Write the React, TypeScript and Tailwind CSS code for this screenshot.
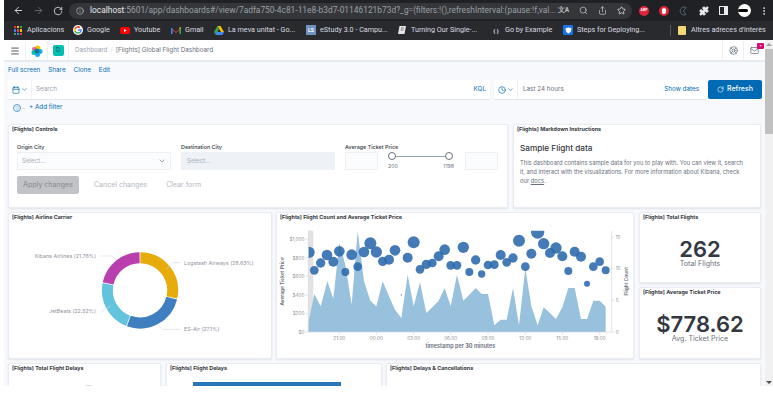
import { ArrowLeft, ArrowRight, RotateCw, Info, Star, Search, Share, Puzzle, MoreVertical, Menu, ChevronDown, Calendar, Clock, LifeBuoy, Mail, Filter } from 'lucide-react';

const bookmarks = [
  { label: 'Aplicacions', icon: <AppsIcon />, w: 'w-[60px]' },
  { label: 'Google', icon: <GoogleIcon />, w: 'w-[47px]' },
  { label: 'Youtube', icon: <YoutubeIcon />, w: 'w-[51px]' },
  { label: 'Gmail', icon: <GmailIcon />, w: 'w-[43px]' },
  { label: 'La meva unitat - Go...', icon: <DriveIcon />, w: 'w-[92px]' },
  { label: 'eStudy 3.0 - Campu...', icon: <StudyIcon />, w: 'w-[91px]' },
  { label: 'Turning Our Single-...', icon: <PageIcon />, w: 'w-[94px]' },
  { label: 'Go by Example', icon: <span className="w-[10px] text-center text-[6px] font-bold text-gray-300">{'{ }'}</span>, w: 'w-[72px]' },
  { label: 'Steps for Deploying...', icon: <ShieldIcon />, w: 'w-[108px]' },
];

function AppsIcon() {
  const colors = ['#ea4335', '#fbbc05', '#34a853', '#4285f4', '#ea4335', '#fbbc05', '#34a853', '#4285f4', '#ea4335'];
  return (
    <div className="grid h-[9px] w-[9px] grid-cols-3 gap-px">
      {colors.map((c, i) => (
        <span key={i} style={{ background: c }} />
      ))}
    </div>
  );
}

function GoogleIcon() {
  return (
    <svg viewBox="0 0 24 24" className="h-[10px] w-[10px]">
      <circle cx="12" cy="12" r="12" fill="#fff" />
      <path d="M21 12.2c0-.7-.1-1.3-.2-1.9H12v3.6h5.1a4.4 4.4 0 0 1-1.9 2.9v2.3h3A9 9 0 0 0 21 12.2z" fill="#4285f4" />
      <path d="M12 21c2.5 0 4.6-.8 6.200-2.200l-3-2.300c-.8.6-1.900.9-3.200.9-2.400 0-4.500-1.600-5.200-3.800H3.700v2.400A9 9 0 0 0 12 21z" fill="#34a853" />
      <path d="M6.800 13.700a5.400 5.400 0 0 1 0-3.400V7.900H3.700a9 9 0 0 0 0 8.200z" fill="#fbbc05" />
      <path d="M12 6.600c1.400 0 2.600.5 3.500 1.400l2.700-2.700A9 9 0 0 0 3.700 7.900l3.100 2.400C7.500 8.200 9.600 6.600 12 6.600z" fill="#ea4335" />
    </svg>
  );
}

function YoutubeIcon() {
  return (
    <svg viewBox="0 0 20 14" className="w-[10px]">
      <rect width="20" height="14" rx="4" fill="#f00" />
      <path d="M8 4l5 3-5 3z" fill="#fff" />
    </svg>
  );
}

function GmailIcon() {
  return (
    <svg viewBox="0 0 20 15" className="w-[10px]">
      <path d="M0 2l10 8 10-8v2l-10 8L0 4z" fill="#ea4335" />
      <path d="M0 2h3v13H1a1 1 0 0 1-1-1z" fill="#4285f4" />
      <path d="M17 2h3v12a1 1 0 0 1-1 1h-2z" fill="#34a853" />
      <path d="M17 5l3-3-1-2-2 1z" fill="#fbbc05" />
    </svg>
  );
}

function DriveIcon() {
  return (
    <svg viewBox="0 0 20 18" className="w-[10px]">
      <path d="M7 0h6l7 12h-6z" fill="#fbbc05" />
      <path d="M7 0l3 6-6 12-4-6z" fill="#34a853" />
      <path d="M6 12h14l-3 6H3z" fill="#4285f4" />
    </svg>
  );
}

function StudyIcon() {
  return (
    <div className="flex h-[10px] w-[10px] items-center justify-center bg-[#6f93bd] text-[5px] font-bold leading-none text-white">
      LS
    </div>
  );
}

function PageIcon() {
  return (
    <svg viewBox="0 0 20 20" className="w-[10px]">
      <path d="M5 2h13l-3 16H2z" fill="#e5e5e5" />
      <path d="M8 6h6M7 10h6" stroke="#555" strokeWidth="1.500" />
    </svg>
  );
}

function ShieldIcon() {
  return (
    <div className="flex h-[10px] w-[10px] items-center justify-center rounded-[1px] bg-[#1a73e8]">
      <svg viewBox="0 0 12 12" className="w-[7px]">
        <path d="M1 2l5-1 5 1c0 5-2 8-5 9-3-1-5-4-5-9z" fill="#fff" />
      </svg>
    </div>
  );
}

function HandIcon() {
  return (
    <svg viewBox="0 0 20 20" className="h-[10px] w-[10px]">
      <circle cx="10" cy="10" r="10" fill="#e0243a" />
      <path d="M6 9V6a1 1 0 0 1 2 0V5a1 1 0 0 1 2 0 1 1 0 0 1 2 0v1a1 1 0 0 1 2 0v6a4 4 0 0 1-4 4H9a3 3 0 0 1-3-3z" fill="#fff" />
    </svg>
  );
}

function MoonIcon() {
  return (
    <svg viewBox="0 0 20 20" className="h-[10px] w-[10px]">
      <path d="M14 3a8 8 0 1 0 0 14M14 3l-5 7 5 7" fill="none" stroke="#4a6470" strokeWidth="2" />
    </svg>
  );
}

function KibanaLogo() {
  return (
    <svg viewBox="0 0 24 24" className="h-[12px] w-[12px]">
      <circle cx="13" cy="7" r="6" fill="#f6c700" />
      <circle cx="6" cy="8" r="4" fill="#ef5aa0" />
      <circle cx="18" cy="13" r="5" fill="#1ba9f5" />
      <circle cx="6" cy="15" r="5" fill="#00bfb3" />
      <circle cx="13" cy="19" r="5" fill="#1ba9f5" />
      <circle cx="12" cy="12" r="5" fill="#0a7d8f" />
    </svg>
  );
}

function Panel({ title, className, children }: { title: string; className: string; children?: React.ReactNode }) {
  return (
    <div className={`relative overflow-hidden rounded-[2px] border border-[#e9ecf2] bg-white shadow-[0_1px_2px_rgba(152,162,179,0.25)] ${className}`}>
      <div className="absolute left-[3px] top-[0px] whitespace-nowrap text-[5.4px] font-bold leading-[9px] text-[#343741]">{title}</div>
      {children}
    </div>
  );
}

const arcs = [
  { from: 0, pct: 28.63, color: '#e7ab0b' },
  { from: 28.63, pct: 27.1, color: '#3f7fbf' },
  { from: 55.73, pct: 22.52, color: '#62c4dc' },
  { from: 78.25, pct: 21.75, color: '#ba3fae' },
];

function arcPath(from: number, pct: number) {
  const r = 98;
  const a0 = (from / 100) * 2 * Math.PI + 0.012;
  const a1 = ((from + pct) / 100) * 2 * Math.PI - 0.012;
  const x0 = 420 + r * Math.sin(a0);
  const y0 = 247 - r * Math.cos(a0);
  const x1 = 420 + r * Math.sin(a1);
  const y1 = 247 - r * Math.cos(a1);
  return `M${x0} ${y0}A${r} ${r} 0 0 1 ${x1} ${y1}`;
}

function Donut() {
  const labels = [
    { x: 552, y: 170, anchor: 'start', text: 'Logstash Airways (28.63%)' },
    { x: 552, y: 368, anchor: 'start', text: 'ES-Air (27.1%)' },
    { x: 288, y: 316, anchor: 'end', text: 'JetBeats (22.52%)' },
    { x: 288, y: 150, anchor: 'end', text: 'Kibana Airlines (21.76%)' },
  ] as const;
  return (
    <svg viewBox="27 15 786 435" className="h-full w-full">
      {arcs.map((a) => (
        <path key={a.color} d={arcPath(a.from, a.pct)} fill="none" stroke={a.color} strokeWidth="33" />
      ))}
      <path d="M498 184l20-20h24M476 350l10 14h56M332 294l-28 16M348 156l-12-12h-34" fill="none" stroke="#d9dce3" strokeWidth="2" />
      {labels.map((l) => (
        <text key={l.text} x={l.x} y={l.y} textAnchor={l.anchor} fontSize="16" fill="#8f949e" fontFamily="Inter, sans-serif">
          {l.text}
        </text>
      ))}
    </svg>
  );
}

const areaPoints =
  '100,372 100,345 118,258 137,295 157,220 175,272 193,105 211,170 230,290 248,68 267,220 286,278 304,295 323,220 342,265 360,305 379,330 398,200 416,295 435,222 454,315 472,298 491,278 509,240 527,295 546,200 565,278 583,260 602,240 620,258 639,258 658,352 677,335 695,335 714,240 732,352 751,180 769,295 788,352 806,298 825,315 843,333 862,298 880,240 899,240 918,333 936,333 955,278 974,278 992,296 992,372';

const bubbles = [
  [102, 133, 17], [118, 187, 13], [137, 165, 14], [156, 141, 16], [175, 161, 15], [193, 130, 16], [211, 192, 12], [230, 140, 16], [248, 176, 13],
  [267, 132, 16], [286, 106, 18], [304, 132, 17], [323, 160, 14], [342, 155, 15], [360, 127, 16], [379, 261, 2], [398, 149, 15], [416, 103, 18],
  [435, 184, 13], [454, 169, 14], [472, 165, 13], [491, 145, 15], [509, 125, 16], [527, 172, 13], [546, 172, 13], [565, 118, 17], [583, 192, 12],
  [602, 156, 14], [620, 198, 11], [639, 171, 13], [658, 170, 13], [677, 141, 15], [695, 163, 13], [714, 150, 14], [732, 98, 18], [751, 176, 13],
  [769, 137, 15], [788, 72, 20], [806, 107, 17], [825, 135, 15], [843, 120, 17], [862, 145, 15], [880, 189, 12], [899, 131, 15], [918, 146, 15],
  [936, 227, 9], [955, 176, 13], [974, 161, 13], [992, 187, 12],
];

const leftTicks = [['$1,000', 94], ['$800', 150], ['$600', 205], ['$400', 261], ['$200', 317], ['$0', 372]] as const;
const rightTicks = [['15', 87], ['10', 182], ['5', 277], ['0', 372]] as const;
const timeTicks = [['21:00', 193], ['00:00', 304], ['03:00', 416], ['06:00', 527], ['09:00', 639], ['12:00', 751], ['15:00', 862], ['18:00', 974]] as const;

function FlightChart() {
  return (
    <svg viewBox="6 15 1068 435" className="h-full w-full" fontFamily="Inter, sans-serif">
      <defs>
        <clipPath id="plot">
          <rect x="100" y="68" width="910" height="304" />
        </clipPath>
      </defs>
      <rect x="100" y="68" width="15" height="304" fill="#e2e2e2" />
      <polygon points={areaPoints} fill="#98c1de" />
      <g clipPath="url(#plot)">
        {bubbles.map(([cx, cy, r]) => (
          <circle key={`${cx}-${cy}`} cx={cx} cy={cy} r={r} fill="#2a69ad" fillOpacity="0.88" />
        ))}
      </g>
      <path d="M100 68v304h910M1010 68v304" fill="none" stroke="#d3d6dc" strokeWidth="2" />
      {leftTicks.map(([t, y]) => (
        <g key={t}>
          <path d={`M92 ${y}h8`} stroke="#d3d6dc" strokeWidth="2" />
          <text x="88" y={y + 5} textAnchor="end" fontSize="14" fill="#8f949e">{t}</text>
        </g>
      ))}
      {rightTicks.map(([t, y]) => (
        <g key={t}>
          <path d={`M1010 ${y}h8`} stroke="#d3d6dc" strokeWidth="2" />
          <text x="1022" y={y + 5} fontSize="14" fill="#8f949e">{t}</text>
        </g>
      ))}
      {timeTicks.map(([t, x]) => (
        <g key={t}>
          <path d={`M${x} 372v8`} stroke="#d3d6dc" strokeWidth="2" />
          <text x={x} y="397" textAnchor="middle" fontSize="14" fill="#8f949e">{t}</text>
        </g>
      ))}
      <text x="556" y="419" textAnchor="middle" fontSize="16.500" fontWeight="600" fill="#69707d">timestamp per <tspan fontWeight="700">30</tspan> minutes</text>
      <text transform="translate(26 220) rotate(-90)" textAnchor="middle" fontSize="14.500" fontWeight="600" fill="#69707d">Average Ticket Price</text>
      <text transform="translate(1058 220) rotate(-90)" textAnchor="middle" fontSize="14.500" fontWeight="600" fill="#69707d">Flight Count</text>
    </svg>
  );
}

function BrowserChrome() {
  return (
    <div className="font-['Roboto',sans-serif] text-[7.200px] text-[#dadce0]">
      <div className="flex h-[21px] items-center bg-[#202124]">
        <div className="flex w-[65px] items-center justify-around pl-[4px] pr-[2px] text-[#dadce0]">
          <ArrowLeft size={11} />
          <ArrowRight size={11} className="text-[#6b6c6e]" />
          <RotateCw size={10} />
        </div>
        <div className="flex h-[16px] w-[563px] items-center rounded-full bg-[#35363a] pl-[7px] pr-[6px]">
          <Info size={8} className="shrink-0 text-[#bdc1c6]" />
          <span className="ml-[6px] w-[462px] shrink-0 whitespace-nowrap text-[8.400px] text-[#9aa0a6]">
            <span className="text-[#e8eaed]">localhost</span>:5601/app/dashboards#/view/7adfa750-4c81-11e8-b3d7-01146121b73d?_g=(filters:!(),refreshInterval:(pause:!f,val...
          </span>
          <div className="ml-auto flex items-center gap-[10px] text-[#bdc1c6]">
            <span className="text-[6.500px] font-bold leading-none">文A</span>
            <Search size={9} />
            <Share size={9} />
            <Star size={9} className="text-[#e8eaed]" />
          </div>
        </div>
        <div className="ml-[7px] flex items-center gap-[10px]">
          <div className="flex h-[10px] w-[10px] items-center justify-center rounded-full bg-[#e0243a] text-[3.500px] font-bold text-white">ABP</div>
          <HandIcon />
          <MoonIcon />
          <Puzzle size={10} fill="#e8eaed" className="text-[#e8eaed]" />
          <div className="h-[9px] w-[9px] border-[1.5px] border-r-[4px] border-[#e8eaed]" />
          <div className="h-[13px] w-[13px] rounded-full bg-white">
            <div className="mt-[5px] h-[3px] w-[10px] rounded-full bg-black" />
          </div>
          <MoreVertical size={10} className="-ml-[2px] text-[#e8eaed]" />
        </div>
      </div>
      <div className="flex h-[19px] items-center bg-[#292a2d] pl-[9px]">
        {bookmarks.map((b) => (
          <div key={b.label} className={`flex items-center gap-[4px] ${b.w}`}>
            <span className="flex w-[10px] justify-center">{b.icon}</span>
            <span className="whitespace-nowrap">{b.label}</span>
          </div>
        ))}
        <div className="ml-[-1px] mr-[7px] h-[11px] w-px bg-[#55575b]" />
        <div className="h-[9px] w-[8px] rounded-[1px] bg-[#f6d776]" />
        <span className="ml-[5px] whitespace-nowrap">Altres adreces d'interès</span>
      </div>
    </div>
  );
}

function Header() {
  return (
    <div className="flex h-[22px] items-stretch border-b-2 border-[#e6ebf2] bg-white pt-px text-[6.300px]">
      <div className="flex w-[22px] items-center justify-center border-r border-[#eef0f4]">
        <Menu size={10} className="ml-[1px] text-[#343741]" />
      </div>
      <div className="flex w-[22px] items-center justify-center border-r border-[#eef0f4]">
        <KibanaLogo />
      </div>
      <div className="flex w-[21px] items-center justify-center border-r border-[#eef0f4]">
        <div className="flex h-[11px] w-[11px] items-center justify-center rounded-[2px] bg-[#00bfb3] text-[5.500px] font-medium text-[#1a5c57]">D</div>
      </div>
      <div className="ml-[6px] flex items-center gap-[3px]">
        <span className="text-[#98a2b3]">Dashboard</span>
        <span className="text-[#d3dae6]">/</span>
        <span className="text-[#69707d]">[Flights] Global Flight Dashboard</span>
      </div>
      <div className="ml-auto flex">
        <div className="flex w-[21px] items-center justify-center border-l border-[#eef0f4]">
          <LifeBuoy size={9} className="text-[#69707d]" />
        </div>
        <div className="relative flex w-[22px] items-center justify-center border-l border-[#eef0f4]">
          <Mail size={9} className="text-[#69707d]" />
          <span className="absolute right-[1px] top-[2px] flex h-[6px] w-[7px] items-center justify-center rounded-[1px] bg-[#dd0a73] text-[4px] leading-none text-white">•</span>
        </div>
      </div>
    </div>
  );
}

function QueryBar() {
  return (
    <div className="text-[6.300px] text-[#69707d]">
      <div className="flex h-[18px] items-center gap-[8px] pl-[4px] text-[#006bb4]">
        <span>Full screen</span>
        <span>Share</span>
        <span>Clone</span>
        <span>Edit</span>
      </div>
      <div className="flex items-center pl-[4px]">
        <div className="flex h-[19px] w-[482px] items-center rounded-[1px] bg-white shadow-[0_1px_1px_rgba(152,162,179,0.2)]">
          <div className="flex h-full w-[24px] items-center justify-center gap-[1px] border-r border-[#eef0f4] text-[#006bb4]">
            <Calendar size={8} />
            <ChevronDown size={7} />
          </div>
          <span className="ml-[4px] text-[#98a2b3]">Search</span>
          <span className="ml-auto mr-[4px] text-[#006bb4]">KQL</span>
        </div>
        <div className="ml-[4px] flex h-[19px] w-[213px] items-center rounded-[1px] bg-white shadow-[0_1px_1px_rgba(152,162,179,0.2)]">
          <div className="flex h-full w-[24px] items-center justify-center gap-[1px] border-r border-[#eef0f4] text-[#006bb4]">
            <Clock size={8} />
            <ChevronDown size={7} />
          </div>
          <span className="ml-[5px] text-[#69707d]">Last 24 hours</span>
          <span className="ml-auto mr-[8px] text-[#006bb4]">Show dates</span>
        </div>
        <div className="ml-[1px] flex h-[19px] w-[54px] items-center justify-center gap-[3px] rounded-[2px] bg-[#006bb4] text-[7px] font-medium text-white">
          <RotateCw size={7} />
          Refresh
        </div>
      </div>
      <div className="flex h-[18px] items-center pl-[9px] text-[#006bb4]">
        <div className="flex h-[8px] w-[8px] items-center justify-center rounded-full border border-[#5d9fd0]">
          <Filter size={5} className="text-[#5d9fd0]" />
        </div>
        <span className="ml-[1px] h-px w-[3px] bg-[#d3dae6]" />
        <span className="ml-[4px]">+ Add filter</span>
      </div>
    </div>
  );
}

function ControlsPanel() {
  return (
    <Panel title="[Flights] Controls" className="h-[84px] w-[500px]">
      <div className="flex gap-[10px] pl-[8px] pt-[17px] text-[5.400px] font-medium text-[#343741]">
        <div className="w-[154px]">
          <div className="h-[10px] leading-[10px]">Origin City</div>
          <div className="flex h-[18px] items-center justify-between border border-[#eef0f4] bg-[#fbfcfd] px-[4px] text-[6.200px] font-normal text-[#a8aeb9]">
            Select...
            <ChevronDown size={8} className="text-[#69707d]" />
          </div>
        </div>
        <div className="w-[154px]">
          <div className="h-[10px] leading-[10px]">Destination City</div>
          <div className="flex h-[18px] items-center bg-[#eef2f7] px-[6px] text-[6.200px] font-normal text-[#a8aeb9]">Select...</div>
        </div>
        <div className="w-[153px]">
          <div className="h-[10px] leading-[10px]">Average Ticket Price</div>
          <div className="flex items-start">
            <div className="h-[18px] w-[33px] shrink-0 border border-[#eef0f4] bg-[#fbfcfd]" />
            <div className="ml-[10px] flex w-[65px] shrink-0 flex-col">
              <div className="flex items-center">
                <span className="h-[8px] w-[8px] rounded-full border border-[#69707d] bg-white" />
                <span className="h-px flex-1 bg-[#98a2b3]" />
                <span className="h-[8px] w-[8px] rounded-full border border-[#69707d] bg-white" />
              </div>
              <div className="mt-[3px] flex justify-between text-[5.200px] font-normal text-[#69707d]">
                <span>200</span>
                <span className="-mr-[1px]">1198</span>
              </div>
            </div>
            <div className="ml-[12px] h-[18px] w-[33px] shrink-0 border border-[#eef0f4] bg-[#fbfcfd]" />
          </div>
        </div>
      </div>
      <div className="mt-[5px] flex items-center pl-[8px] text-[7px] text-[#b4b9c2]">
        <div className="flex h-[18px] w-[62px] items-center justify-center rounded-[2px] bg-[#c2c3c6] font-medium text-[#8f9299]">Apply changes</div>
        <span className="ml-[15px]">Cancel changes</span>
        <span className="ml-[19px]">Clear form</span>
      </div>
    </Panel>
  );
}

function MarkdownPanel() {
  return (
    <Panel title="[Flights] Markdown Instructions" className="h-[84px] w-[248px]">
      <div className="pl-[6px] pr-[14px] pt-[18px] text-[#69707d]">
        <div className="text-[8.200px] font-medium leading-[10px] text-[#343741]">Sample Flight data</div>
        <p className="mt-[5px] text-[5.800px] leading-[9px]">
          This dashboard contains sample data for you to play with. You can view it, search it, and interact with the visualizations. For more information about Kibana, check our <span className="underline">docs</span>.
        </p>
      </div>
    </Panel>
  );
}

function MetricPanel({ title, value, label, className }: { title: string; value: string; label: string; className: string }) {
  return (
    <Panel title={title} className={`flex flex-col items-center justify-center pt-[12px] ${className}`}>
      <div className="text-[22px] font-semibold leading-[19px] text-[#343741]">{value}</div>
      <div className="text-[7.100px] leading-[9px] text-[#69707d]">{label}</div>
    </Panel>
  );
}

export default function App() {
  return (
    <div className="h-[407px] w-[773px] overflow-hidden bg-white pl-[4px] font-['Inter',sans-serif]">
      <div className="flex h-[386px] flex-col overflow-hidden">
        <BrowserChrome />
        <div className="flex min-h-0 flex-1">
          <div className="min-w-0 flex-1 bg-[#f7f9fc]">
            <Header />
            <QueryBar />
            <div className="flex flex-col gap-[4px] pl-[4px] pt-[7px]">
              <div className="flex gap-[5px]">
                <ControlsPanel />
                <MarkdownPanel />
              </div>
              <div className="flex gap-[4px]">
                <Panel title="[Flights] Airline Carrier" className="h-[147px] w-[264px]">
                  <Donut />
                </Panel>
                <Panel title="[Flights] Flight Count and Average Ticket Price" className="h-[147px] w-[358px]">
                  <FlightChart />
                </Panel>
                <div className="ml-px flex w-[122px] flex-col gap-[4px]">
                  <MetricPanel title="[Flights] Total Flights" value="262" label="Total Flights" className="h-[71px]" />
                  <MetricPanel title="[Flights] Average Ticket Price" value="$778.62" label="Avg. Ticket Price" className="h-[72px]" />
                </div>
              </div>
              <div className="flex">
                <Panel title="[Flights] Total Flight Delays" className="h-[30px] w-[153px]">
                  <div className="absolute left-[72px] top-[21px] h-[20px] w-[16px] rounded-full border-t border-[#d3d6dc]" />
                </Panel>
                <Panel title="[Flights] Flight Delays" className="ml-[5px] h-[30px] w-[216px]">
                  <div className="absolute left-[26px] top-[18px] h-[10px] w-[148px] bg-[#2a74b8]" />
                </Panel>
                <Panel title="[Flights] Delays & Cancellations" className="ml-[4px] h-[30px] w-[375px]" />
              </div>
            </div>
          </div>
          <div className="relative w-[8px] bg-[#f1f1f1]">
            <div className="mx-auto mt-[3px] h-0 w-0 border-x-[3px] border-b-[3px] border-x-transparent border-b-[#a3a3a3]" />
            <div className="absolute left-0 right-0 top-[9px] h-[85px] bg-[#c1c1c1]" />
            <div className="absolute bottom-[2px] left-[1px] h-0 w-0 border-x-[3px] border-t-[3px] border-x-transparent border-t-[#505050]" />
          </div>
        </div>
      </div>
    </div>
  );
}
